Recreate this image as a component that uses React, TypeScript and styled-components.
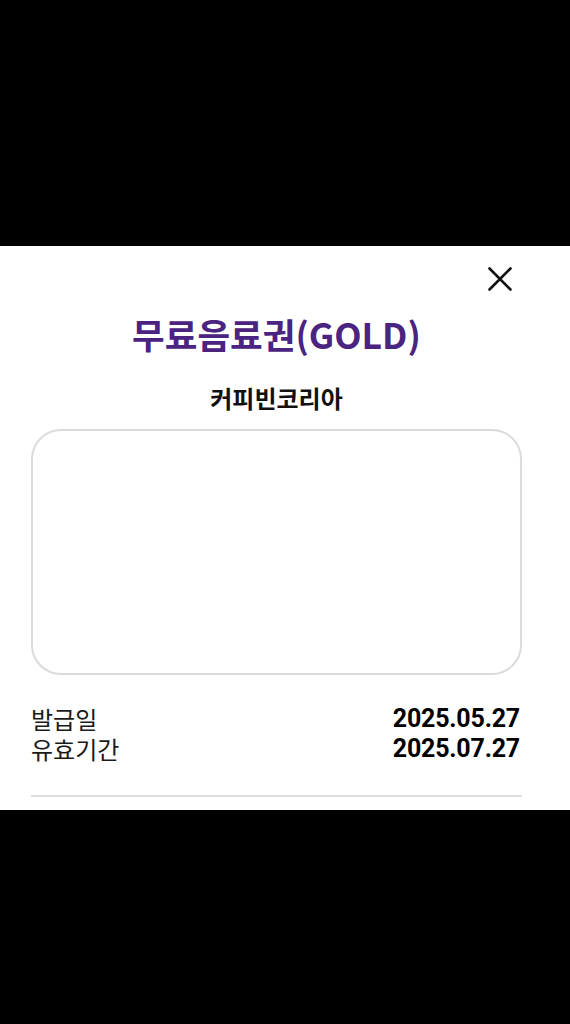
import styled, { createGlobalStyle } from 'styled-components';

const GlobalStyle = createGlobalStyle`
  html, body {
    margin: 0;
    padding: 0;
    background: #000;
  }
  body {
    font-family: "Noto Sans CJK KR", "Noto Sans", sans-serif;
  }
`;

const Page = styled.div`
  width: 570px;
  height: 1024px;
  background: #000;
  padding-top: 246px;
  box-sizing: border-box;
`;

const Sheet = styled.section`
  height: 564px;
  background: #fff;
  box-sizing: border-box;
  padding: 21px 48px 0 31px;
  display: flex;
  flex-direction: column;
`;

const CloseRow = styled.div`
  display: flex;
  justify-content: flex-end;
  padding-right: 10px;
  height: 24px;
`;

const CloseButton = styled.button`
  width: 24px;
  height: 24px;
  padding: 0;
  border: none;
  background: none;
  cursor: pointer;
  display: flex;
`;

const Title = styled.h1`
  margin: 23px 0 0;
  text-align: center;
  font-family: "Noto Sans CJK KR", sans-serif;
  font-size: 35.5px;
  line-height: 40px;
  font-weight: 700;
  color: #4a2480;
`;

const Brand = styled.h2`
  margin: 28px 0 0;
  text-align: center;
  font-family: "Noto Sans CJK KR", sans-serif;
  font-size: 24px;
  line-height: 32px;
  font-weight: 700;
  color: #111;
`;

const CouponBox = styled.div`
  margin-top: 15px;
  height: 246px;
  box-sizing: border-box;
  border: 2px solid #dcd9df;
  border-radius: 30px;
  background: #fff;
`;

const InfoList = styled.dl`
  margin: 29px 0 0;
  display: flex;
  flex-direction: column;
`;

const InfoRow = styled.div`
  display: flex;
  justify-content: space-between;
  align-items: center;
  height: 30px;
`;

const InfoLabel = styled.dt`
  font-family: "Noto Sans CJK KR", sans-serif;
  font-size: 24px;
  line-height: 30px;
  font-weight: 400;
  color: #1a1a1a;
`;

const InfoValue = styled.dd`
  margin: 0;
  padding-right: 2px;
  font-family: Roboto, "Liberation Sans", sans-serif;
  font-size: 25px;
  line-height: 30px;
  font-weight: 700;
  color: #000;
  letter-spacing: -0.2px;
`;

const Divider = styled.hr`
  margin: 31px 0 0;
  border: none;
  height: 2px;
  background: #dedde0;
`;

const CloseIcon = () => (
  <svg width="24" height="24" viewBox="0 0 24 24" fill="none">
    <path d="M1.5 1.5L22.5 22.5M22.5 1.5L1.5 22.5" stroke="#111" strokeWidth="2.6" strokeLinecap="round" />
  </svg>
);

const infos = [
  { label: '발급일', value: '2025.05.27' },
  { label: '유효기간', value: '2025.07.27' },
];

export default function App() {
  return (
    <Page>
      <GlobalStyle />
      <Sheet>
        <CloseRow>
          <CloseButton aria-label="닫기">
            <CloseIcon />
          </CloseButton>
        </CloseRow>
        <Title>무료음료권(GOLD)</Title>
        <Brand>커피빈코리아</Brand>
        <CouponBox />
        <InfoList>
          {infos.map(info => (
            <InfoRow key={info.label}>
              <InfoLabel>{info.label}</InfoLabel>
              <InfoValue>{info.value}</InfoValue>
            </InfoRow>
          ))}
        </InfoList>
        <Divider />
      </Sheet>
    </Page>
  );
}
